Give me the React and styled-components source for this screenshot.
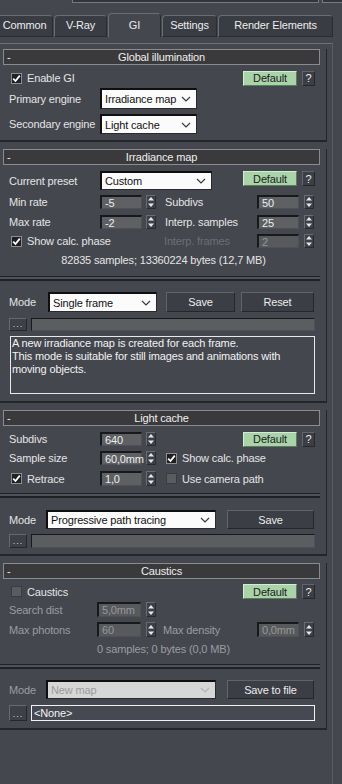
import React from 'react';
import styled, { createGlobalStyle } from 'styled-components';

const GlobalStyle = createGlobalStyle`
  html, body {
    margin: 0;
    padding: 0;
    background: #45474f;
  }
  body {
    font-family: "Liberation Sans", Arial, sans-serif;
    font-size: 11px;
    letter-spacing: -0.15px;
    color: #e6e6e6;
  }
  * { box-sizing: border-box; }
`;

const tones = {
  normal: '#e4e4e4',
  soft: '#9a9ca2',
  dim: '#6c6e75',
};

const Screen = styled.div`
  width: 342px;
  height: 784px;
  overflow: hidden;
  background: #45474f;
`;

const TopStrip = styled.div`
  display: flex;
  height: 3px;
`;

const StripPiece = styled.div`
  flex: none;
  margin-left: ${p => p.$ml}px;
  width: ${p => p.$w}px;
  background: #33353c;
  border: 1px solid #787a80;
  border-top: none;
`;

const TabBar = styled.div`
  display: flex;
  align-items: flex-end;
  gap: 1px;
  height: 34px;
  margin-left: -4px;
`;

const Tab = styled.div`
  flex: none;
  width: ${p => p.$w}px;
  height: ${p => (p.$active ? 24 : 22)}px;
  display: flex;
  align-items: center;
  justify-content: center;
  padding-bottom: 2px;
  background: ${p => (p.$active ? '#45474f' : '#3a3c44')};
  border: 1px solid #6b6d74;
  border-right-color: #2b2c31;
  border-bottom: ${p => (p.$active ? 'none' : '1px solid #2b2c31')};
  border-radius: 4px 4px 0 0;
  color: #ececec;
`;

const Panel = styled.div`
  margin-top: 6px;
  width: 333px;
  height: 741px;
  border-top: 1px solid #6e7077;
  border-right: 1px solid #5a5c64;
  padding-top: 5px;
`;

const Rollout = styled.section`
  width: 327px;
  border-right: 1px solid #24252a;
  border-bottom: 2px solid #24252a;
  padding-bottom: ${p => p.$pb}px;
  margin-bottom: 7px;
`;

const RollHeader = styled.div`
  margin-left: 3px;
  width: 317px;
  height: 16px;
  background: #3a3a3c;
  border: 1px solid #8a8b8f;
  display: grid;
  grid-template-columns: 12px 1fr 12px;
  align-items: center;
  line-height: 14px;
  color: #efefef;
`;

const Collapse = styled.span`
  padding-left: 3px;
`;

const HeadTitle = styled.span`
  text-align: center;
`;

const Row = styled.div`
  display: flex;
  align-items: center;
  height: ${p => p.$h}px;
  margin-top: ${p => p.$mt}px;
  padding: 0 11px 0 9px;
`;

const Spacer = styled.div`
  flex: 1;
`;

const Label = styled.span`
  flex: none;
  width: ${p => (p.$w ? `${p.$w}px` : 'auto')};
  margin-left: ${p => p.$ml || 0}px;
  color: ${p => tones[p.$tone || 'normal']};
  white-space: nowrap;
`;

const Field = styled.div`
  flex: none;
  width: ${p => p.$w}px;
  height: 100%;
  margin-left: ${p => p.$ml || 0}px;
  display: flex;
  align-items: center;
  padding-left: 3px;
  background: ${p => (p.$off ? '#58595c' : '#5f6063')};
  border-top: 2px solid #18191b;
  border-left: 2px solid #18191b;
  border-right: 1px solid #505156;
  border-bottom: 1px solid #505156;
  color: ${p => (p.$off ? '#96979b' : '#ededed')};
`;

const Arrows = styled.div`
  flex: none;
  width: 10px;
  height: 100%;
  margin-left: ${p => p.$ml}px;
  display: flex;
  align-items: center;
  justify-content: center;
  background: #3e4047;
  border: 1px solid #6a6c73;
  border-right-color: #2a2b30;
  border-bottom-color: #2a2b30;
`;

const Select = styled.div`
  flex: none;
  width: ${p => p.$w}px;
  height: 100%;
  display: flex;
  align-items: center;
  justify-content: space-between;
  padding: 0 5px 0 3px;
  background: ${p => (p.$off ? '#d6d6d6' : '#fbfbfb')};
  border: 2px solid #0f0f11;
  border-right: 1px solid #2a2a2d;
  border-bottom: 1px solid #2a2a2d;
  color: ${p => (p.$off ? '#9b9b9b' : '#111')};
  white-space: nowrap;
`;

const Button = styled.div`
  flex: none;
  width: ${p => p.$w}px;
  height: ${p => (p.$h ? `${p.$h}px` : '100%')};
  margin-left: ${p => p.$ml || 0}px;
  align-self: ${p => (p.$top ? 'flex-start' : 'auto')};
  display: flex;
  align-items: center;
  justify-content: center;
  background: ${p => (p.$green ? '#a9d3a9' : '#3c3e46')};
  color: ${p => (p.$green ? '#1c1c1c' : '#ececec')};
  border: 1px solid ${p => (p.$green ? '#d4ecd4' : '#62646b')};
  border-right-color: ${p => (p.$green ? '#5d7a5d' : '#26272b')};
  border-bottom-color: ${p => (p.$green ? '#5d7a5d' : '#26272b')};
`;

const Check = styled.span`
  flex: none;
  width: 11px;
  height: 11px;
  margin-left: ${p => p.$ml ?? 2}px;
  display: flex;
  align-items: center;
  justify-content: center;
  background: ${p => (p.$on ? '#202023' : '#5b5c60')};
  border: 1px solid ${p => (p.$on ? '#8d8e92' : '#3b3c40')};
`;

const Note = styled.div`
  height: 12px;
  margin-top: ${p => p.$mt}px;
  line-height: 12px;
  padding-left: ${p => p.$pl || 0}px;
  text-align: ${p => (p.$center ? 'center' : 'left')};
  color: ${p => tones[p.$tone || 'normal']};
  width: 327px;
`;

const Divider = styled.div`
  margin-top: ${p => p.$mt}px;
  width: 320px;
  height: 5px;
  border-top: 1px solid #202125;
  border-bottom: 2px solid #202125;
  background: #50525a;
`;

const Dots = styled.div`
  flex: none;
  width: 18px;
  height: 100%;
  display: flex;
  align-items: flex-end;
  justify-content: center;
  padding-bottom: 1px;
  background: #3e4047;
  border: 1px solid #676970;
  border-right-color: #26272b;
  border-bottom-color: #26272b;
  font-size: 9px;
  line-height: 9px;
  letter-spacing: 1px;
  color: #d8d8d8;
`;

const PathField = styled.div`
  flex: 1;
  height: 100%;
  margin-left: 4px;
  display: flex;
  align-items: center;
  padding-left: 2px;
  background: ${p => (p.$framed ? '#464852' : '#5c5d60')};
  border: ${p => (p.$framed ? '1px solid #f2f2f2' : '1px solid #505156')};
  border-top-color: ${p => (p.$framed ? '#f2f2f2' : '#18191b')};
  border-left-color: ${p => (p.$framed ? '#f2f2f2' : '#18191b')};
  color: #f4f4f4;
`;

const DescBox = styled.div`
  margin: 5px 0 0 10px;
  width: 305px;
  height: 58px;
  border: 1px solid #e9e9e9;
  padding-left: 1px;
  line-height: 13px;
  color: #f2f2f2;
`;

function Spin({ value, w = 42, gap = 4, off, ml }) {
  return (
    <>
      <Field $w={w} $off={off} $ml={ml}>{value}</Field>
      <Arrows $ml={gap}>
        <svg width="8" height="12" viewBox="0 0 8 12">
          <polygon points="4,1 7,4.5 1,4.5" fill="#e8e8e8" />
          <polygon points="1,7.5 7,7.5 4,11" fill="#e8e8e8" />
        </svg>
      </Arrows>
    </>
  );
}

function Drop({ value, w, off }) {
  return (
    <Select $w={w} $off={off}>
      <span>{value}</span>
      <svg width="10" height="6" viewBox="0 0 10 6">
        <path d="M1 1 L5 5 L9 1" fill="none" stroke={off ? '#b4b4b4' : '#3a3a3a'} strokeWidth="1.2" />
      </svg>
    </Select>
  );
}

function Box({ on, ml }) {
  return (
    <Check $on={on} $ml={ml}>
      {on && (
        <svg width="9" height="9" viewBox="0 0 9 9">
          <path d="M1.2 4.6 L3.5 7 L7.8 1.6" fill="none" stroke="#ffffff" strokeWidth="1.8" />
        </svg>
      )}
    </Check>
  );
}

function DefaultPair({ top }) {
  return (
    <>
      <Button $green $w={54} $h={15} $top={top}>Default</Button>
      <Button $w={13} $h={15} $ml={5} $top={top}>?</Button>
    </>
  );
}

function Header({ title }) {
  return (
    <RollHeader>
      <Collapse>-</Collapse>
      <HeadTitle>{title}</HeadTitle>
      <span />
    </RollHeader>
  );
}

export default function App() {
  return (
    <Screen>
      <GlobalStyle />
      <TopStrip>
        <StripPiece $ml={72} $w={247} />
        <StripPiece $ml={3} $w={24} />
      </TopStrip>
      <TabBar>
        <Tab $w={57}>Common</Tab>
        <Tab $w={53}>V-Ray</Tab>
        <Tab $w={53} $active>GI</Tab>
        <Tab $w={55}>Settings</Tab>
        <Tab $w={115}>Render Elements</Tab>
      </TabBar>

      <Panel>
        <Rollout $pb={6}>
          <Header title="Global illumination" />
          <Row $mt={5} $h={16}>
            <Box on />
            <Label $ml={5}>Enable GI</Label>
            <Spacer />
            <DefaultPair />
          </Row>
          <Row $mt={2} $h={21}>
            <Label $w={91}>Primary engine</Label>
            <Drop w={97} value="Irradiance map" />
          </Row>
          <Row $mt={5} $h={20}>
            <Label $w={91}>Secondary engine</Label>
            <Drop w={97} value="Light cache" />
          </Row>
        </Rollout>

        <Rollout $pb={7}>
          <Header title="Irradiance map" />
          <Row $mt={6} $h={19}>
            <Label $w={91}>Current preset</Label>
            <Drop w={112} value="Custom" />
            <Spacer />
            <DefaultPair top />
          </Row>
          <Row $mt={5} $h={14}>
            <Label $w={91}>Min rate</Label>
            <Spin value="-5" />
            <Label $w={92} $ml={9}>Subdivs</Label>
            <Spin value="50" gap={5} />
          </Row>
          <Row $mt={6} $h={14}>
            <Label $w={91}>Max rate</Label>
            <Spin value="-2" />
            <Label $w={92} $ml={9}>Interp. samples</Label>
            <Spin value="25" gap={5} />
          </Row>
          <Row $mt={5} $h={14}>
            <Box on />
            <Label $w={137} $ml={5}>Show calc. phase</Label>
            <Label $w={93} $tone="dim">Interp. frames</Label>
            <Spin value="2" gap={5} off />
          </Row>
          <Note $mt={6} $center>82835 samples; 13360224 bytes (12,7 MB)</Note>
          <Divider $mt={10} />
          <Row $mt={11} $h={20}>
            <Label $w={39}>Mode</Label>
            <Drop w={109} value="Single frame" />
            <Button $w={69} $ml={9}>Save</Button>
            <Button $w={73} $ml={6}>Reset</Button>
          </Row>
          <Row $mt={6} $h={13}>
            <Dots>...</Dots>
            <PathField />
          </Row>
          <DescBox>
            A new irradiance map is created for each frame.
            <br />
            This mode is suitable for still images and animations with
            <br />
            moving objects.
          </DescBox>
        </Rollout>

        <Rollout $pb={6}>
          <Header title="Light cache" />
          <Row $mt={6} $h={14}>
            <Label $w={91}>Subdivs</Label>
            <Spin value="640" />
            <Spacer />
            <DefaultPair />
          </Row>
          <Row $mt={5} $h={14}>
            <Label $w={91}>Sample size</Label>
            <Spin value="60,0mm" />
            <Box on ml={10} />
            <Label $ml={5}>Show calc. phase</Label>
          </Row>
          <Row $mt={6} $h={15}>
            <Box on />
            <Label $w={73} $ml={5}>Retrace</Label>
            <Spin value="1,0" />
            <Box ml={10} />
            <Label $ml={5}>Use camera path</Label>
          </Row>
          <Divider $mt={7} />
          <Row $mt={12} $h={19}>
            <Label $w={37}>Mode</Label>
            <Drop w={170} value="Progressive path tracing" />
            <Button $w={87} $ml={11}>Save</Button>
          </Row>
          <Row $mt={5} $h={14}>
            <Dots>...</Dots>
            <PathField />
          </Row>
        </Rollout>

        <Rollout $pb={7}>
          <Header title="Caustics" />
          <Row $mt={5} $h={15}>
            <Box />
            <Label $ml={5}>Caustics</Label>
            <Spacer />
            <DefaultPair />
          </Row>
          <Row $mt={3} $h={15}>
            <Label $w={88} $tone="soft">Search dist</Label>
            <Spin value="5,0mm" w={44} gap={5} off />
          </Row>
          <Row $mt={5} $h={15}>
            <Label $w={88} $tone="soft">Max photons</Label>
            <Spin value="60" w={44} gap={5} off />
            <Label $w={94} $ml={7} $tone="soft">Max density</Label>
            <Spin value="0,0mm" gap={5} off />
          </Row>
          <Note $mt={6} $pl={97} $tone="soft">0 samples; 0 bytes (0,0 MB)</Note>
          <Divider $mt={9} />
          <Row $mt={11} $h={19}>
            <Label $w={37} $tone="soft">Mode</Label>
            <Drop w={170} value="New map" off />
            <Button $w={87} $ml={11}>Save to file</Button>
          </Row>
          <Row $mt={6} $h={16}>
            <Dots>...</Dots>
            <PathField $framed>&lt;None&gt;</PathField>
          </Row>
        </Rollout>
      </Panel>
    </Screen>
  );
}
